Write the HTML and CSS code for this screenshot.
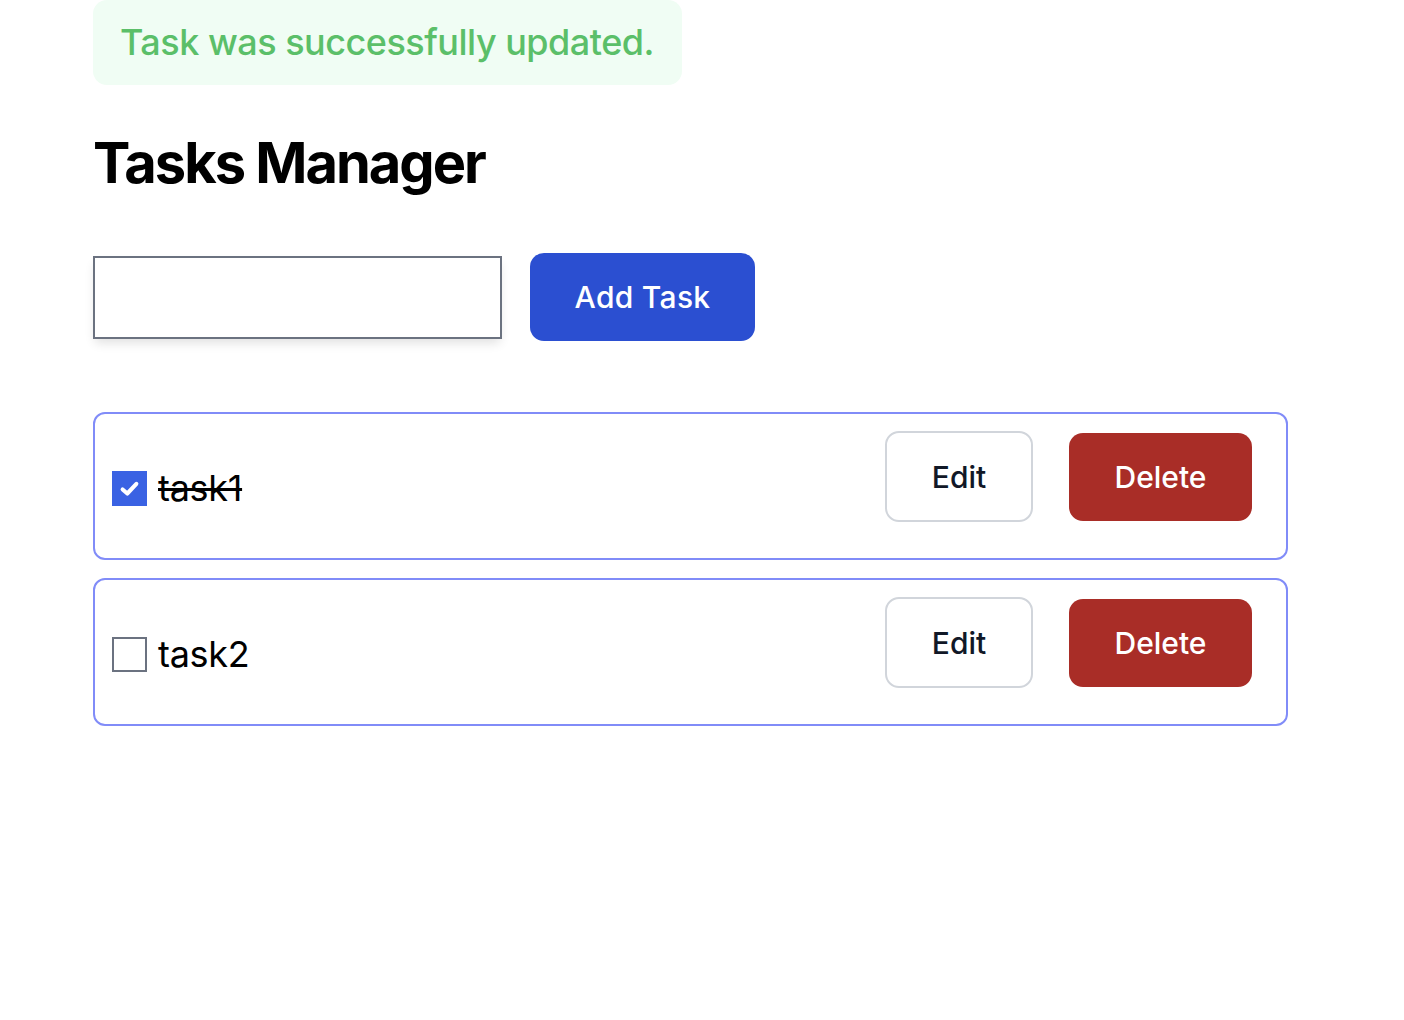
FILE: index.html
```html
<!DOCTYPE html>
<html lang="en">
<head>
<meta charset="utf-8">
<title>Tasks Manager</title>
<link rel="stylesheet" href="styles.css">
</head>
<body>
<main class="page">
  <div class="notice">Task was successfully updated.</div>
  <h1 class="title">Tasks Manager</h1>
  <form class="add-form">
    <input class="task-input" type="text" aria-label="New task">
    <button class="btn btn-add" type="button">Add Task</button>
  </form>
  <ul class="task-list">
    <li class="task-row">
      <label class="task-label">
        <span class="check checked">
          <svg viewBox="0 0 16 16" width="25" height="25"><path d="M3.6 8.6 L6.6 11.2 L12.4 5" fill="none" stroke="#fff" stroke-width="2.6" stroke-linecap="round" stroke-linejoin="round"/></svg>
        </span>
        <span class="task-text done">task1</span>
      </label>
      <div class="actions">
        <button class="btn btn-edit" type="button">Edit</button>
        <button class="btn btn-delete" type="button">Delete</button>
      </div>
    </li>
    <li class="task-row">
      <label class="task-label">
        <span class="check"></span>
        <span class="task-text">task2</span>
      </label>
      <div class="actions">
        <button class="btn btn-edit" type="button">Edit</button>
        <button class="btn btn-delete" type="button">Delete</button>
      </div>
    </li>
  </ul>
</main>
</body>
</html>
```
FILE: styles.css
```css
* { box-sizing: border-box; }
html, body { margin: 0; padding: 0; background: #fff; }
body { font-family: Inter, "Noto Sans", "Liberation Sans", sans-serif; color: #000; }

.page { padding-left: 93px; width: 1288px; }

.notice {
  display: inline-block;
  background: #f0fdf4;
  color: #5bbf69;
  font-size: 36px;
  font-weight: 500;
  line-height: 54px;
  letter-spacing: -0.5px;
  padding: 15px 28px 16px 27px;
  border-radius: 14px;
}

.title {
  margin: 45px 0 0;
  font-size: 56px;
  font-weight: 700;
  line-height: 67px;
  letter-spacing: -2px;
}

.add-form {
  display: flex;
  align-items: center;
  gap: 28px;
  margin-top: 56px;
}
.task-input {
  width: 409px;
  height: 83px;
  border: 2px solid #6b7280;
  background: #fff;
  box-shadow: 0 6px 10px -2px rgba(0,0,0,0.12);
  font-size: 30px;
  font-family: inherit;
  padding: 0 16px;
  outline: none;
}

.btn {
  font-family: inherit;
  font-size: 30px;
  font-weight: 500;
  border-radius: 14px;
  cursor: pointer;
}
.btn-add {
  width: 225px;
  height: 88px;
  background: #2b4fd1;
  color: #fff;
  border: none;
  letter-spacing: 0.3px;
}

.task-list {
  list-style: none;
  margin: 71px 0 0;
  padding: 0;
  display: flex;
  flex-direction: column;
  gap: 18px;
}
.task-row {
  display: flex;
  align-items: center;
  justify-content: space-between;
  border: 2px solid #818cf8;
  border-radius: 12px;
  padding: 17px 34px 17px 17px;
}
.task-label {
  display: flex;
  align-items: center;
  gap: 11px;
  margin-top: 5px;
}
.check {
  width: 35px;
  height: 35px;
  border: 2px solid #6b7280;
  background: #fff;
  display: flex;
  align-items: center;
  justify-content: center;
}
.check.checked {
  background: #3a62e3;
  border-color: #3a62e3;
}
.task-text {
  font-size: 36px;
  line-height: 44px;
  letter-spacing: -0.3px;
  color: #000;
  position: relative;
  top: -1px;
}
.task-text.done { text-decoration: line-through; text-decoration-thickness: 3px; }

.actions {
  display: flex;
  align-items: center;
  gap: 36px;
  margin-bottom: 19px;
}
.btn-edit {
  width: 148px;
  height: 91px;
  background: #fff;
  color: #111827;
  border: 2px solid #d1d5db;
}
.btn-delete {
  width: 183px;
  height: 88px;
  background: #a92d27;
  color: #fff;
  border: none;
}
```
